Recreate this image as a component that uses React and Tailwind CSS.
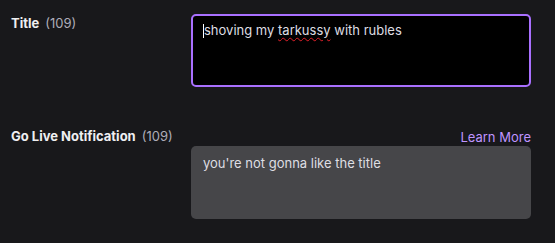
export default function App() {
  return (
    <div className="w-[555px] h-[243px] bg-[#18181b] text-[#efeff1] text-[13px] leading-4 overflow-hidden" style={{ fontFamily: 'Inter, "Noto Sans", sans-serif' }}>
      <div className="grid grid-cols-[180px_340px] pl-[11px] pt-[14px]">
        {/* Title row */}
        <div className="pt-px">
          <span className="font-bold">Title</span>
          <span className="ml-[6px] text-[#adadb8]">(109)</span>
        </div>
        <div className="h-[73px] rounded-[5px] border-2 border-[#a970ff] bg-black pl-[10px] pt-[6px] text-[#dedee3]">
          <span className="inline-block w-px h-[14px] bg-white align-[-3px]"></span>
          <span>shoving my </span>
          <span className="underline decoration-wavy decoration-[#e0202a] decoration-1 underline-offset-2">tarkussy</span>
          <span> with rubles</span>
        </div>

        {/* Go Live Notification row */}
        <div className="pt-[41px]">
          <span className="font-bold">Go Live Notification</span>
          <span className="ml-[6px] text-[#adadb8]">(109)</span>
        </div>
        <div className="pt-[42px]">
          <div className="flex justify-end mb-px">
            <a className="text-[#bf94ff]">Learn More</a>
          </div>
          <div className="h-[73px] rounded-[5px] bg-[#464649] pl-[12px] pt-[9px] text-[#dedee3]">
            you're not gonna like the title
          </div>
        </div>
      </div>
    </div>
  )
}
